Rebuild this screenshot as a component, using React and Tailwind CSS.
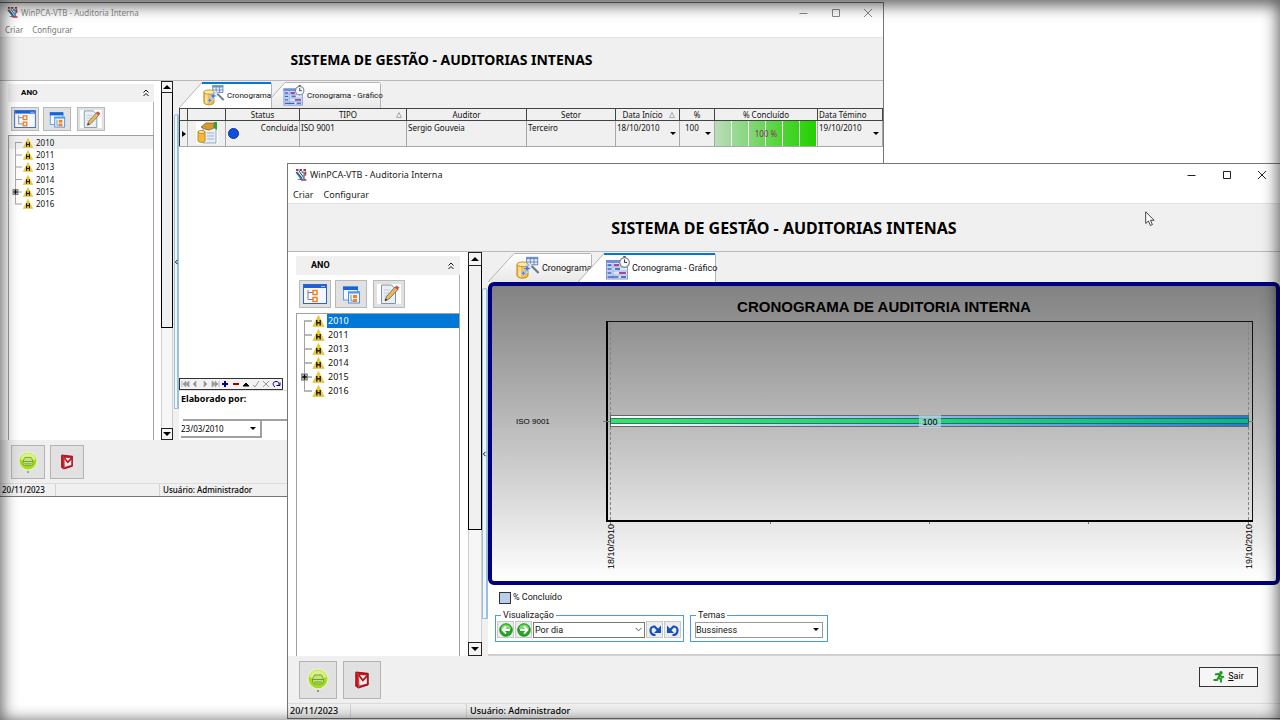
import React from "react";

const YEARS = ["2010", "2011", "2013", "2014", "2015", "2016"];

function AppLogo({ className }) {
  return (
    <svg viewBox="0 0 12 12" className={className} aria-hidden="true">
      <path d="M1 1h2.500M4.500 1H7M8.500 1H11" stroke="#a33a3a" strokeWidth="1.800" />
      <path d="M.5 3.500l2-1 4.500 6 1 2.500H2l3-1.500z" fill="#4a7fa8" />
      <path d="M1 3l6 6M4 2l5 7" stroke="#274d78" strokeWidth="1" />
      <path d="M6.500 3c3.500 0 3.500 2 2.500 4s0 3 1 3" stroke="#5b93c4" strokeWidth="2" fill="none" />
      <path d="M6 11h5.500M10.500 2.500v4" stroke="#c03838" strokeWidth="1.600" />
    </svg>
  );
}

function TreeIcon({ className }) {
  return (
    <svg viewBox="0 0 24 20" className={className} aria-hidden="true">
      <rect x="0.5" y="0.5" width="23" height="19" fill="#f4f8fe" stroke="#2f66c4" />
      <rect x="1" y="1" width="22" height="3" fill="#1d5fd8" />
      <path d="M18 2.500h4" stroke="#9fc4ff" />
      <path d="M5 6v9.500h5M5 8.500h5" stroke="#7a8591" fill="none" />
      <rect x="10" y="6.500" width="4" height="4" fill="#fff" stroke="#ee8420" strokeWidth="1.500" />
      <rect x="10" y="13.500" width="4" height="4" fill="#fff" stroke="#ee8420" strokeWidth="1.500" />
    </svg>
  );
}

function CopyTreeIcon({ className }) {
  return (
    <svg viewBox="0 0 24 20" className={className} aria-hidden="true">
      <rect x="4.500" y="3" width="14" height="13" fill="#f4f9ff" stroke="#5f9be6" />
      <rect x="4" y="2.500" width="15" height="3.500" fill="#1766d8" />
      <rect x="9.500" y="8" width="11" height="11" fill="#eaf3ff" stroke="#4b8fe0" />
      <rect x="9" y="7.500" width="12" height="2" fill="#4d9bf0" />
      <path d="M12 11v6h2" stroke="#8090a0" fill="none" />
      <rect x="14" y="11" width="4" height="3" fill="#ef8321" />
      <rect x="14" y="15" width="4" height="3" fill="#ef8321" />
    </svg>
  );
}

function EditIcon({ className }) {
  return (
    <svg viewBox="0 0 24 20" className={className} aria-hidden="true">
      <rect x="0" y="0" width="24" height="20" fill="#fff" />
      <path d="M4.500 1h10l4 4v14.500h-14z" fill="#e9eff5" stroke="#7e93a8" />
      <path d="M7 6h6M7 9h5M7 12h3M7 15h4" stroke="#bccad8" />
      <path d="M8 17l1.500-4.500L18 3l3 2.500-9 9.500z" fill="#e5b964" stroke="#79622e" strokeWidth=".8" />
      <path d="M17.500 3.500L19.500 1.500l3 2-2 2.500z" fill="#c4545e" />
      <path d="M8 17l.7-2.500 1.700 1.500z" fill="#222" />
    </svg>
  );
}

function WarnIcon({ className }) {
  return (
    <svg viewBox="0 0 12 12" className={className} aria-hidden="true">
      <path d="M6 .5L11.700 11.500H.3z" fill="#f0cd22" stroke="#d6b83a" strokeWidth=".6" />
      <path d="M4.300 5v5.500M7.700 5v5.500M4.300 7.800h3.400" stroke="#241c00" strokeWidth="1.400" fill="none" />
    </svg>
  );
}

function WizardIcon({ className }) {
  return (
    <svg viewBox="0 0 26 24" className={className} aria-hidden="true">
      <rect x="11.500" y=".5" width="12" height="8" fill="#e8effa" stroke="#6685b8" />
      <rect x="11" y="0" width="13" height="2.500" fill="#6d8fca" />
      <path d="M11 5.500h13M15.500 1v8M19.500 1v8" stroke="#6685b8" />
      <path d="M1 8v12c0 4 12 4 12 0V8z" fill="#f2b63a" stroke="#c98613" />
      <path d="M2.500 10v10c0 1 2 2 3 2V10z" fill="#ffe394" />
      <ellipse cx="7" cy="8" rx="6" ry="2.500" fill="#fde9a8" stroke="#c98613" />
      <path d="M15 8l9.500 9.500" stroke="#6f7884" strokeWidth="2.400" />
      <path d="M14 7l3 3" stroke="#dfe6ee" strokeWidth="2.200" />
      <path d="M12 7.500l1.300 3.700L17 12.500l-3.700 1.300L12 17.500l-1.300-3.700L7 12.500l3.700-1.300zM8 14l1 2.700 2.700 1-2.700 1L8 21.500l-1-2.800-2.700-1 2.700-1z" fill="#3f7fe8" stroke="#e9f1ff" strokeWidth=".6" />
    </svg>
  );
}

function GanttIcon({ className }) {
  return (
    <svg viewBox="0 0 24 24" className={className} aria-hidden="true">
      <rect x=".5" y="4.500" width="21" height="18.500" fill="#dfe8fa" stroke="#7e97d0" />
      <rect x="0" y="4" width="22" height="3" fill="#6f8edb" />
      <path d="M7 7v16M0 11h22M0 15h22M0 19h22" stroke="#9cb2e2" />
      <path d="M1.500 9.200h4M1.500 13h4M1.500 17h4M1.500 21h11" stroke="#3e62c0" strokeWidth="1.700" />
      <path d="M8 9.200h5M13 17h7" stroke="#a24a94" strokeWidth="2.200" />
      <path d="M9 13h5M15 21h5" stroke="#5372cc" strokeWidth="2.200" />
      <path d="M18.500 0v2" stroke="#555" strokeWidth="2.500" />
      <circle cx="18.500" cy="6.500" r="4.800" fill="#f6f8fa" stroke="#7b848d" strokeWidth="1.200" />
      <path d="M18.500 3.500v3H21" stroke="#333" fill="none" />
    </svg>
  );
}

function PrinterIcon({ className }) {
  return (
    <svg viewBox="0 0 22 24" className={className} aria-hidden="true">
      <circle cx="11" cy="11" r="10" fill="#a5dc1c" stroke="#e6efcf" strokeWidth="1.400" />
      <path d="M2.500 9a8.700 8.700 0 0117 0c-4 2-13 2-17 0z" fill="#d9f283" />
      <path d="M5.500 11l2-4h7l2 4v3L15 16H7l-1.500-2z" fill="#c6e473" stroke="#71a339" />
      <path d="M5.500 11.500h11M7 14h8" stroke="#6b9c3a" />
      <path d="M10 23h2" stroke="#444" />
    </svg>
  );
}

function MailBookIcon({ className }) {
  return (
    <svg viewBox="0 0 18 20" className={className} aria-hidden="true">
      <path d="M2 1l14 1.500v13L5 19l-3-2z" fill="#c41722" stroke="#86090f" />
      <path d="M5.500 4.500l9 .5v9l-8.500 2.500z" fill="#f4eded" />
      <path d="M5 4l5 6.500L15 5" fill="none" stroke="#b3111b" strokeWidth="2" />
      <path d="M2 1.500l3 3 .5 12-.5 2" fill="none" stroke="#e35c62" strokeWidth=".8" />
    </svg>
  );
}

function ContractIcon({ className }) {
  return (
    <svg viewBox="0 0 22 22" className={className} aria-hidden="true">
      <rect x="0" y="0" width="22" height="22" fill="#fff" />
      <path d="M7 5h13v16H7z" fill="#e6eef7" stroke="#93a9c1" />
      <path d="M11 11h7M11 14h7M11 17h7" stroke="#9fb5cd" />
      <path d="M2 10v8.500c0 2.500 7 2.500 7 0V10z" fill="#f2ba3d" stroke="#c28618" />
      <ellipse cx="5.500" cy="10" rx="3.500" ry="1.500" fill="#fde9a8" stroke="#c28618" />
      <path d="M5 5l5-4h8v5l-5 2-4-1z" fill="#d69a2d" stroke="#94651a" strokeWidth=".8" />
      <path d="M18 0h3v8l-3-2z" fill="#35a13c" />
    </svg>
  );
}

function Caret({ up, className }) {
  return (
    <svg viewBox="0 0 8 4" className={className} aria-hidden="true">
      <path d={up ? "M0 4h8L4 0z" : "M0 0h8L4 4z"} fill="#000" />
    </svg>
  );
}

function TitleBar({ small }) {
  return (
    <header className={small ? "flex h-[19px] items-center pl-[7px] text-[#8a8a8a]" : "flex h-[22px] items-center pl-[7px] text-[#222]"}>
      <AppLogo className={small ? "h-[11px] w-[11px]" : "h-3 w-3"} />
      <span className={small ? "ml-[3px] text-[8px]" : "ml-[3px] text-[9px]"}>WinPCA-VTB - Auditoria Interna</span>
      <div className={small ? "ml-auto flex gap-5 pr-[9px]" : "ml-auto flex gap-[23px] pr-3"}>
        {["M1.500 6.500h8", "M2.500 2.500h7v7h-7z", "M2 2l8 8M10 2l-8 8"].map((d, i) => (
          <button key={d} aria-label={["Minimizar", "Maximizar", "Fechar"][i]} className="h-3 w-3">
            <svg viewBox="0 0 12 12" className="h-3 w-3" fill="none" stroke="currentColor" aria-hidden="true">
              <path d={d} />
            </svg>
          </button>
        ))}
      </div>
    </header>
  );
}

function MenuBar({ small }) {
  return (
    <nav className={small ? "flex h-[15px] items-center gap-[9px] pl-[5px] text-[8px] text-[#777]" : "flex h-[17px] items-center gap-[10px] pl-[5px] text-[9px] text-[#222]"}>
      <button>Criar</button>
      <button>Configurar</button>
    </nav>
  );
}

function Sidebar({ small }) {
  const tool = small
    ? "flex h-6 w-7 items-center justify-center border border-[#b8b8b8] bg-[#e1e1e1]"
    : "flex h-7 w-8 items-center justify-center border border-[#b8b8b8] bg-[#e1e1e1]";
  const icon = small ? "h-[18px] w-[22px]" : "h-5 w-6";
  return (
    <aside className={small ? "flex w-[161px] shrink-0 flex-col bg-white pt-[3px] pr-[7px] pl-2" : "flex w-[180px] shrink-0 flex-col bg-white pt-1 pr-2 pl-2"}>
      <div className={small ? "flex h-[18px] items-center justify-between bg-[#f0f0f0] pr-[5px] pl-[13px]" : "flex h-[19px] items-center justify-between bg-[#f0f0f0] pr-[6px] pl-[15px]"}>
        <h2 className={small ? "text-[8px] font-bold" : "text-[9px] font-bold"}>ANO</h2>
        <button aria-label="Recolher">
          <svg viewBox="0 0 6 8" className="h-2 w-[6px]" fill="none" stroke="#111" aria-hidden="true">
            <path d="M.5 3.500L3 1l2.500 2.500M.5 7L3 4.500 5.500 7" />
          </svg>
        </button>
      </div>
      <div className={small ? "flex h-[33px] items-center border-r border-[#b0b0b0] pl-[3px]" : "flex h-[38px] items-center border-r border-[#b0b0b0] pl-[3px]"}>
        <button aria-label="Expandir" className={tool}><TreeIcon className={icon} /></button>
        <button aria-label="Recolher tudo" className={"ml-1 " + tool}><CopyTreeIcon className={icon} /></button>
        <button aria-label="Editar" className={"ml-[6px] " + tool}><EditIcon className={icon} /></button>
      </div>
      <ul className={small ? "flex-1 border-x border-t border-[#a0a0a0] font-['Noto_Sans',sans-serif] text-[8px] text-[#111]" : "flex-1 border-x border-t border-[#a0a0a0] font-['Noto_Sans',sans-serif] text-[9px] text-[#111]"}>
        {YEARS.map((y, i) => (
          <li key={y} className={small ? "flex h-[12px] items-center first:h-[13px] first:bg-[#f0f0f0] [&:nth-child(4)]:h-[13px]" : "flex h-[14px] items-stretch"}>
            <svg viewBox="0 0 20 14" preserveAspectRatio="none" className={small ? "h-full w-[13px] shrink-0" : "h-full w-[15px] shrink-0"} aria-hidden="true">
              <path d={i === 0 ? "M10 14V7h10" : i === YEARS.length - 1 ? "M10 0v7h10" : "M10 0v14M10 7h10"} fill="none" stroke="#a0a0a0" strokeWidth="1.300" />
              {y === "2015" && (
                <>
                  <rect x="6" y="4" width="8" height="6" fill="#aaa" stroke="#777" />
                  <path d="M7 7h6M10 4.500v5" stroke="#000" strokeWidth="1.400" />
                </>
              )}
            </svg>
            <WarnIcon className={small ? "h-[10px] w-3 shrink-0" : "h-3 w-[13px] shrink-0 self-center"} />
            <span className={small ? "ml-[2px]" : i === 0 ? "ml-[2px] flex flex-1 items-center bg-[#0078d7] pl-px text-white" : "ml-[2px] flex flex-1 items-center pl-px"}>{y}</span>
          </li>
        ))}
      </ul>
    </aside>
  );
}

function ScrollBar({ small }) {
  const button = small
    ? "flex h-3 shrink-0 items-center justify-center border border-[#222] bg-[#f4f4f4]"
    : "flex h-[14px] shrink-0 items-center justify-center border border-[#222] bg-[#f4f4f4]";
  return (
    <div className={small ? "flex w-3 shrink-0 flex-col bg-[#f6f6f6]" : "flex w-[14px] shrink-0 flex-col bg-[#f6f6f6]"}>
      <button aria-label="Rolar para cima" className={button}><Caret up className="h-1 w-2" /></button>
      <div className={small ? "h-[235px] border-x border-b border-black bg-[#f0f0f0]" : "h-[264px] border-x border-b border-black bg-[#f0f0f0]"} />
      <div className="flex-1 border-x border-[#cfcfcf]" />
      <button aria-label="Rolar para baixo" className={button}><Caret className="h-1 w-2" /></button>
    </div>
  );
}

function Splitter({ small }) {
  return (
    <div className={small ? "flex w-[6px] shrink-0 flex-col bg-[#f0f0f0] pt-[33px]" : "flex w-[6px] shrink-0 flex-col bg-[#f0f0f0] pt-9"}>
      <div className={small ? "ml-px flex h-[295px] items-center rounded-t-sm border border-r-2 border-[#9ac1dc] bg-[#f2f6f9]" : "flex h-[331px] items-center rounded-t-sm border border-r-2 border-[#9ac1dc] bg-[#f2f6f9]"}>
        <svg viewBox="0 0 4 6" className="h-[6px] w-[3px] shrink-0" aria-hidden="true"><path d="M3.500 0L.5 3l3 3" fill="none" stroke="#000" strokeWidth="1.300" /></svg>
      </div>
    </div>
  );
}

function Tab({ small, active, width, icon, label, overlap }) {
  const Icon = icon;
  const slant = small ? 23 : 26;
  const h = small ? 26 : 29;
  const size = small ? "h-[26px] text-[8px]" : "h-[29px] pl-[28px] text-[9px]";
  const start = small ? (overlap ? "-ml-[10px] pl-[21px]" : "pl-[24px]") : overlap ? "-ml-[14px]" : "";
  return (
    <button
      role="tab"
      aria-selected={active}
      style={{ width }}
      className={`relative flex items-center text-[#111] ${size} ${start} ${active ? "z-10" : ""}`}
    >
      <svg viewBox={`0 0 ${width} ${h}`} className="absolute inset-0 h-full w-full" aria-hidden="true">
        <defs>
          <linearGradient id="tabFill" x1="0" y1="0" x2="0" y2="1">
            <stop offset="0" stopColor="#fff" />
            <stop offset="1" stopColor="#e8e8e8" />
          </linearGradient>
        </defs>
        <path d={`M0 ${h}L${slant} .5H${width - 1.5}l1 1V${h}`} fill={active ? "#fff" : "url(#tabFill)"} stroke="#b4b4b4" />
        {active && <path d={`M${slant} 1H${width - 1}`} stroke="#0078d7" strokeWidth="2" />}
      </svg>
      <Icon className={small ? "relative h-[21px] w-[22px] shrink-0" : "relative h-6 w-6 shrink-0"} />
      <span className="relative ml-[2px] pt-[2px] whitespace-nowrap">{label}</span>
    </button>
  );
}

const COLS = [
  { w: "w-[8px]", t: "" },
  { w: "w-[38px]", t: "" },
  { w: "w-[74px]", t: "Status" },
  { w: "w-[107px]", t: "TIPO", sort: true },
  { w: "w-[120px]", t: "Auditor" },
  { w: "w-[89px]", t: "Setor" },
  { w: "w-[64px]", t: "Data Início", sort: true },
  { w: "w-[35px]", t: "%" },
  { w: "w-[103px]", t: "% Concluído" },
  { w: "w-[65px]", t: "Data Témino", left: true },
];

function AuditTable() {
  const td = "border-r border-b border-[#a8a8a8] p-0 align-top";
  return (
    <table className="w-full table-fixed border-collapse border-l border-[#333] font-['Noto_Sans',sans-serif] text-[8px] text-[#111]">
      <thead>
        <tr className="h-3">
          {COLS.map((c, i) => (
            <th key={i} className={c.w + " border border-[#444] bg-[#f0f0f0] p-0 leading-[11px] font-normal whitespace-nowrap"}>
              <div className="flex items-center">
                <span className={c.left ? "flex-1 pl-px text-left" : "flex-1 text-center"}>{c.t}</span>
                {c.sort && (
                  <svg viewBox="0 0 6 6" className="mr-1 h-[6px] w-[6px]" aria-hidden="true"><path d="M3 .5L5.500 5.500H.5z" fill="none" stroke="#aaa" /></svg>
                )}
              </div>
            </th>
          ))}
        </tr>
      </thead>
      <tbody>
        <tr className="h-[26px] bg-[#f0f0f0] leading-[14px]">
          <td className={td + " border-l border-l-[#333]"}>
            <svg viewBox="0 0 4 6" className="mt-[10px] ml-[2px] h-[6px] w-1" aria-hidden="true"><path d="M0 0v6l4-3z" fill="#000" /></svg>
          </td>
          <td className={td}><ContractIcon className="mx-auto mt-[1px] h-[22px] w-[22px]" /></td>
          <td className={td}>
            <div className="flex justify-between pl-[2px]">
              <svg viewBox="0 0 12 12" className="mt-[7px] h-[11px] w-[11px]" aria-hidden="true"><circle cx="6" cy="6" r="5.500" fill="#0d4fe0" stroke="#0a2f8c" /></svg>
              <span className="pr-px">Concluída</span>
            </div>
          </td>
          <td className={td + " pl-px"}>ISO 9001</td>
          <td className={td + " pl-px"}>Sergio Gouveia</td>
          <td className={td + " pl-px"}>Terceiro</td>
          <td className={td}><DropCell value="18/10/2010" /></td>
          <td className={td}><DropCell value="100" inset /></td>
          <td className={td}>
            <div className="flex h-[25px] items-center justify-center bg-[repeating-linear-gradient(90deg,transparent_0px,transparent_16px,#fff_16px,#fff_17px),linear-gradient(90deg,#bcdcbc,#8cd884_28%,#4fd535_65%,#22d000)] text-[8px] text-[#8f2a66]">
              100 %
            </div>
          </td>
          <td className={td}><DropCell value="19/10/2010" /></td>
        </tr>
      </tbody>
    </table>
  );
}

function DropCell({ value, inset }) {
  return (
    <div className="flex h-[25px] justify-between pr-[3px]">
      <span className={inset ? "pl-[5px]" : "pl-px"}>{value}</span>
      <button aria-label="Abrir lista" className="mt-[11px] flex h-1"><Caret className="h-[3px] w-[6px]" /></button>
    </div>
  );
}

const NAV = [
  ["Primeiro", "M1 1v6M5 1L2 4l3 3zM8 1L5 4l3 3z", "#999"],
  ["Anterior", "M5 1L2 4l3 3z", "#999"],
  ["Próximo", "M3 1l3 3-3 3z", "#999"],
  ["Último", "M1 1l3 3-3 3zM4 1l3 3-3 3zM8 1v6", "#999"],
  ["Inserir", "M1 4h6M4 1v6", "#00008b"],
  ["Excluir", "M1 4h6", "#a00000"],
  ["Editar", "M1 6h6L4 3z", "#000"],
  ["Gravar", "M1 5l2 2 4-6", "#999"],
  ["Cancelar", "M1 1l6 6M7 1L1 7", "#999"],
  ["Atualizar", "M3 7C0 5 1 1.500 4 1.500S7 3 7 5M4.500 5.500H8V2.500", "#00008b"],
];

function Navigator() {
  return (
    <div className="flex h-3 w-[104px] items-center justify-around border border-[#333] bg-[#f2f2f2]">
      {NAV.map(([name, d, color], i) => (
        <button key={name} aria-label={name}>
          <svg viewBox="0 0 9 8" className="h-2 w-[9px]" aria-hidden="true">
            <path d={d} stroke={color} fill={i < 4 || i === 6 ? color : "none"} strokeWidth={i === 4 || i === 5 ? 2 : i < 4 ? 0.7 : 1} />
          </svg>
        </button>
      ))}
    </div>
  );
}

function GanttChart() {
  return (
    <svg viewBox="0 0 784 295" className="block h-full w-full font-['Liberation_Sans',sans-serif]" role="img" aria-label="Cronograma de auditoria interna">
      <defs>
        <linearGradient id="bar" x1="0" x2="1" y1="0" y2="0">
          <stop offset="0" stopColor="#fff" />
          <stop offset=".5" stopColor="#8db8ea" />
          <stop offset="1" stopColor="#2c78cc" />
        </linearGradient>
        <linearGradient id="done" x1="0" x2="1" y1="0" y2="0">
          <stop offset="0" stopColor="#35e26b" />
          <stop offset=".5" stopColor="#1fd475" />
          <stop offset="1" stopColor="#0bb58e" />
        </linearGradient>
      </defs>
      <text x="392" y="26" textAnchor="middle" fontSize="15" fontWeight="bold">CRONOGRAMA DE AUDITORIA INTERNA</text>
      <rect x="114.500" y="35.500" width="646" height="200" fill="none" stroke="#111" />
      <path d="M115 35v200M114 235h647" stroke="#000" strokeWidth="2" fill="none" />
      <path d="M118.500 36v203M756.500 36v203" stroke="#858585" strokeDasharray="3 2" />
      <path d="M111 135.500h7M278.500 236v2M437.500 236v2M596.500 236v2M757 135.500h4" stroke="#777" />
      <rect x="118.500" y="129.500" width="638" height="11" fill="url(#bar)" stroke="#666" />
      <rect x="118.500" y="132.500" width="638" height="5" fill="url(#done)" stroke="#1f5a52" strokeWidth=".8" />
      <rect x="427" y="129" width="22" height="13" fill="#b9dadd" fillOpacity=".65" />
      <text x="438" y="139" textAnchor="middle" fontSize="9">100</text>
      <text x="24" y="138" fontSize="8">ISO 9001</text>
      <text transform="translate(122 283) rotate(-90)" fontSize="9">18/10/2010</text>
      <text transform="translate(760 283) rotate(-90)" fontSize="9">19/10/2010</text>
    </svg>
  );
}

function RoundArrow({ back }) {
  return (
    <svg viewBox="0 0 14 14" className="h-[14px] w-[14px]" aria-hidden="true">
      <circle cx="7" cy="7" r="6.300" fill="#22aa22" stroke="#16801a" strokeWidth=".8" />
      <path d="M2 6a5 4.500 0 0110 0z" fill="#7fdc6b" />
      <path d={back ? "M11 7H4M7 3.500L3.500 7 7 10.500" : "M3 7h7M7 3.500L10.500 7 7 10.500"} fill="none" stroke="#fff" strokeWidth="1.800" />
    </svg>
  );
}

function TurnArrow({ left }) {
  return (
    <svg viewBox="0 0 14 14" className="h-[14px] w-[14px]" aria-hidden="true">
      <path d={left ? "M6.500 12c6.500 0 6.500-9 1-8.500L4 7" : "M7.500 12C1 12 1 3 6.500 3.500L10 7"} fill="none" stroke="#1450bd" strokeWidth="2.200" />
      <path d={left ? "M1 2.500V10h7z" : "M13 2.500V10H6z"} fill="#1450bd" />
    </svg>
  );
}

function ChartControls() {
  const box = "flex h-[17px] w-[17px] items-center justify-center border border-[#c8c8c8] bg-[#ececec]";
  return (
    <div className="px-[7px] pt-[7px] text-[9px] text-[#111]">
      <div className="ml-1 flex h-3 items-center gap-[2px]">
        <span className="h-3 w-3 border border-[#333] bg-[#b7cfea]" />
        <span>% Concluído</span>
      </div>
      <div className="mt-[6px] flex gap-[6px]">
        <fieldset className="flex h-8 w-[189px] items-center border border-[#4a9be0] px-px pb-[3px]">
          <legend className="ml-1 px-[2px] leading-[11px]">Visualização</legend>
          <div className="flex items-center gap-px">
            <button aria-label="Anterior" className={box}><RoundArrow back /></button>
            <button aria-label="Próximo" className={box}><RoundArrow /></button>
            <div className="relative flex items-center">
              <select aria-label="Visualização" className="h-4 w-28 appearance-none border border-[#777] bg-white pl-px text-[9px] leading-[14px]">
                <option>Por dia</option>
              </select>
              <svg viewBox="0 0 8 5" className="pointer-events-none absolute right-[3px] h-[5px] w-[7px]" fill="none" stroke="#444" aria-hidden="true"><path d="M.5 .5L4 4 7.500 .5" /></svg>
            </div>
            <button aria-label="Refazer" className={box}><TurnArrow /></button>
            <button aria-label="Desfazer" className={box}><TurnArrow left /></button>
          </div>
        </fieldset>
        <fieldset className="flex h-8 w-[137px] items-center border border-[#4a9be0] px-1 pb-[3px]">
          <legend className="ml-px px-[2px] leading-[11px]">Temas</legend>
          <div className="relative flex items-center">
            <select aria-label="Temas" className="h-4 w-32 appearance-none border border-[#999] bg-white text-[9px] leading-[14px]">
              <option>Bussiness</option>
            </select>
            <Caret className="pointer-events-none absolute right-1 h-[3px] w-[6px]" />
          </div>
        </fieldset>
      </div>
    </div>
  );
}

function Footer({ small }) {
  const b = small
    ? "flex h-[34px] w-[34px] items-center justify-center border border-[#b4b4b4] bg-[#e1e1e1]"
    : "flex h-[38px] w-[38px] items-center justify-center border border-[#b4b4b4] bg-[#e1e1e1]";
  return (
    <div className={small ? "flex h-[43px] shrink-0 items-center gap-[5px] pl-[11px]" : "flex h-[47px] shrink-0 items-center gap-[6px] pr-[22px] pl-[11px]"}>
      <button aria-label="Imprimir" className={b}><PrinterIcon className={small ? "h-[22px] w-5" : "h-6 w-[22px]"} /></button>
      <button aria-label="Enviar" className={b}><MailBookIcon className={small ? "h-4 w-[14px]" : "h-[18px] w-4"} /></button>
      {!small && (
        <button className="mb-[5px] ml-auto flex h-5 w-[59px] items-center justify-center gap-[3px] border border-[#333] bg-[#f6f6f6] text-[9px]">
          <svg viewBox="0 0 12 12" className="h-3 w-3" aria-hidden="true">
            <circle cx="8" cy="1.800" r="1.700" fill="#1c9a1c" />
            <path d="M2 3.500l3-.5 2 .5-1.500 3L8 8.500v3M5.500 6.500L4 9H.5M7 4l2 2.500 2-1" fill="none" stroke="#1c9a1c" strokeWidth="1.900" />
          </svg>
          <span><u>S</u>air</span>
        </button>
      )}
    </div>
  );
}

function StatusBar({ small }) {
  return (
    <footer className={small ? "flex h-[13px] shrink-0 items-center border-t border-[#dcdcdc] pl-[2px] font-['Noto_Sans',sans-serif] text-[8px] font-medium" : "flex h-[15px] shrink-0 items-center border-t border-[#dcdcdc] pl-[2px] font-['Noto_Sans',sans-serif] text-[9px] font-medium"}>
      <span className={small ? "w-[54px] border-r border-[#d4d4d4]" : "w-[61px] border-r border-[#d4d4d4]"}>20/11/2023</span>
      <span className={small ? "w-[104px] border-r border-[#d4d4d4]" : "w-[116px] border-r border-[#d4d4d4]"}>&nbsp;</span>
      <span className="pl-[3px]">Usuário: Administrador</span>
    </footer>
  );
}

function AppWindow({ small, children, tabs, className }) {
  return (
    <section className={className + " absolute flex flex-col overflow-hidden border border-[#777] bg-[#f0f0f0]"}>
      <div className="shrink-0 bg-white font-['Noto_Sans',sans-serif]">
        <TitleBar small={small} />
        <MenuBar small={small} />
      </div>
      <h1 className={small ? "flex h-11 shrink-0 items-center justify-center border-t border-b border-t-[#e2e2e2] border-b-[#b8b8b8] font-['Noto_Sans',sans-serif] text-[14px] font-bold" : "flex h-[49px] shrink-0 items-center justify-center border-t border-b border-t-[#e2e2e2] border-b-[#b8b8b8] font-['Noto_Sans',sans-serif] text-[16px] font-bold"}>
        SISTEMA DE GESTÃO - AUDITORIAS INTENAS
      </h1>
      <div className="flex min-h-0 flex-1">
        <Sidebar small={small} />
        <ScrollBar small={small} />
        <Splitter small={small} />
        <main className="flex min-w-0 flex-1 flex-col">
          <div role="tablist" className="isolate flex shrink-0 pt-px">{tabs}</div>
          {children}
        </main>
      </div>
      <Footer small={small} />
      <StatusBar small={small} />
    </section>
  );
}

export default function App() {
  return (
    <div className="relative min-h-screen overflow-hidden bg-white font-['Roboto',sans-serif] text-black">
      <AppWindow
        small
        className="top-[2px] left-0 h-[495px] w-[884px] border-l-0"
        tabs={
          <>
            <Tab small active width={93} icon={WizardIcon} label="Cronograma" />
            <Tab small overlap width={119} icon={GanttIcon} label="Cronograma - Gráfico" />
          </>
        }
      >
        <div className="flex min-h-0 flex-1 flex-col bg-white">
          <AuditTable />
          <div className="flex-1" />
          <Navigator />
          <div className="border-t border-[#ddd] pl-[2px] font-['Noto_Sans',sans-serif]">
            <label htmlFor="date" className="block h-7 pt-px text-[9px] font-bold">Elaborado por:</label>
            <div className="ml-[2px] border-t-2 border-[#a0a0a0]" />
            <div className="relative mb-[2px] flex w-[81px] items-center border-r-2 border-b-2 border-[#a0a0a0]">
              <select id="date" className="h-[15px] w-full appearance-none bg-white text-[8px]">
                <option>23/03/2010</option>
              </select>
              <Caret className="pointer-events-none absolute right-1 h-[3px] w-[6px]" />
            </div>
          </div>
        </div>
      </AppWindow>

      <AppWindow
        className="top-[163px] right-0 bottom-[1px] left-[287px] border-r-0"
        tabs={
          <>
            <Tab width={104} icon={WizardIcon} label="Cronograma" />
            <Tab active overlap width={138} icon={GanttIcon} label="Cronograma - Gráfico" />
          </>
        }
      >
        <div className="flex min-h-0 flex-1 flex-col border-b-2 border-[#d0d0d0] bg-white">
          <div className="min-h-0 flex-1 rounded-md border-4 border-[#000080] bg-linear-to-b from-[#828282] to-white">
            <GanttChart />
          </div>
          <div className="h-[69px] shrink-0"><ChartControls /></div>
        </div>
      </AppWindow>

      <svg viewBox="0 0 10 16" className="pointer-events-none absolute top-[211px] left-[1145px] h-4 w-[10px]" aria-hidden="true">
        <path d="M.7 .8v11.700l2.700-2.500 2 4.500 2-.9-2-4.300h3.700z" fill="#fff" stroke="#333" strokeWidth=".9" />
      </svg>
      <div className="pointer-events-none absolute inset-0 shadow-[inset_0_3px_16px_2px_rgba(0,0,0,0.65)]" />
    </div>
  );
}
